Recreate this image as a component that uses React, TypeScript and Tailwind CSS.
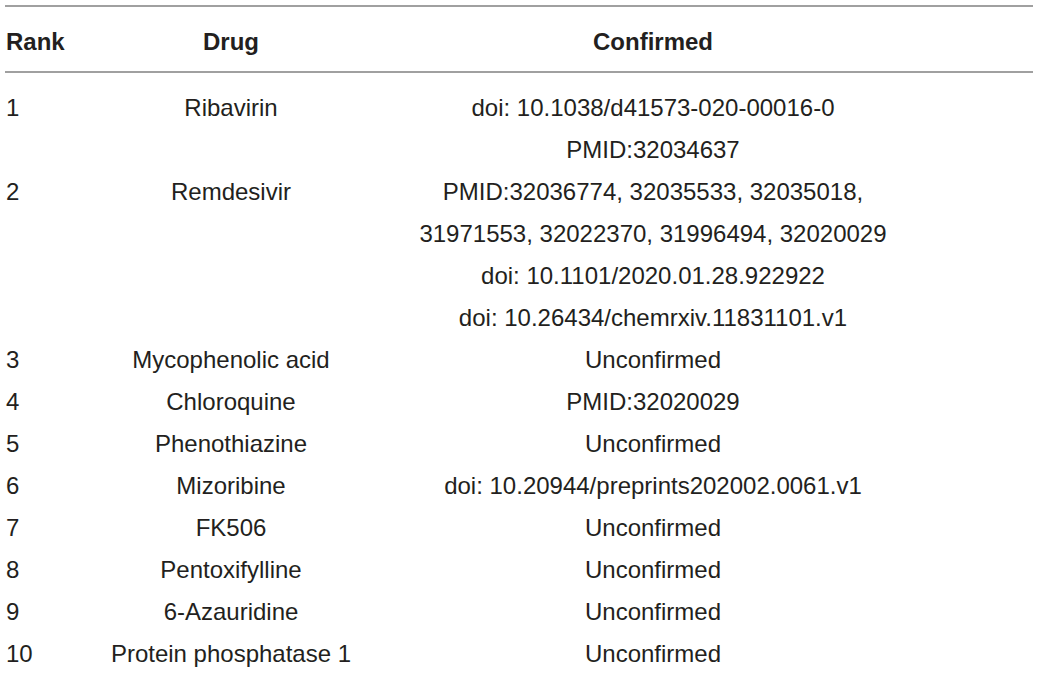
const rows: { rank: string; drug: string; confirmed: string[] }[] = [
  {
    rank: "1",
    drug: "Ribavirin",
    confirmed: ["doi: 10.1038/d41573-020-00016-0", "PMID:32034637"],
  },
  {
    rank: "2",
    drug: "Remdesivir",
    confirmed: [
      "PMID:32036774, 32035533, 32035018,",
      "31971553, 32022370, 31996494, 32020029",
      "doi: 10.1101/2020.01.28.922922",
      "doi: 10.26434/chemrxiv.11831101.v1",
    ],
  },
  { rank: "3", drug: "Mycophenolic acid", confirmed: ["Unconfirmed"] },
  { rank: "4", drug: "Chloroquine", confirmed: ["PMID:32020029"] },
  { rank: "5", drug: "Phenothiazine", confirmed: ["Unconfirmed"] },
  {
    rank: "6",
    drug: "Mizoribine",
    confirmed: ["doi: 10.20944/preprints202002.0061.v1"],
  },
  { rank: "7", drug: "FK506", confirmed: ["Unconfirmed"] },
  { rank: "8", drug: "Pentoxifylline", confirmed: ["Unconfirmed"] },
  { rank: "9", drug: "6-Azauridine", confirmed: ["Unconfirmed"] },
  { rank: "10", drug: "Protein phosphatase 1", confirmed: ["Unconfirmed"] },
];

export default function App() {
  return (
    <div className="w-[1039px] h-[676px] bg-white overflow-hidden pt-[5px] pl-[5px] font-['Liberation_Sans',Arial,sans-serif] text-[24px] leading-[42px] text-[#231f20]">
      <div className="w-[1028px]">
        <div className="grid grid-cols-[100px_252px_592px] border-t-[2px] border-b-[2px] border-[#a0a0a0] pt-[14px] pb-[8px] font-bold">
          <div className="pl-[1px]">Rank</div>
          <div className="text-center">Drug</div>
          <div className="text-center">Confirmed</div>
        </div>
        <div className="pt-[14px]">
          {rows.map((row) => (
            <div
              key={row.rank}
              className="grid grid-cols-[100px_252px_592px] items-start"
            >
              <div className="pl-[1px]">{row.rank}</div>
              <div className="text-center whitespace-nowrap">{row.drug}</div>
              <div className="flex flex-col items-center whitespace-nowrap">
                {row.confirmed.map((line, i) => (
                  <span key={i}>{line}</span>
                ))}
              </div>
            </div>
          ))}
        </div>
      </div>
    </div>
  );
}
